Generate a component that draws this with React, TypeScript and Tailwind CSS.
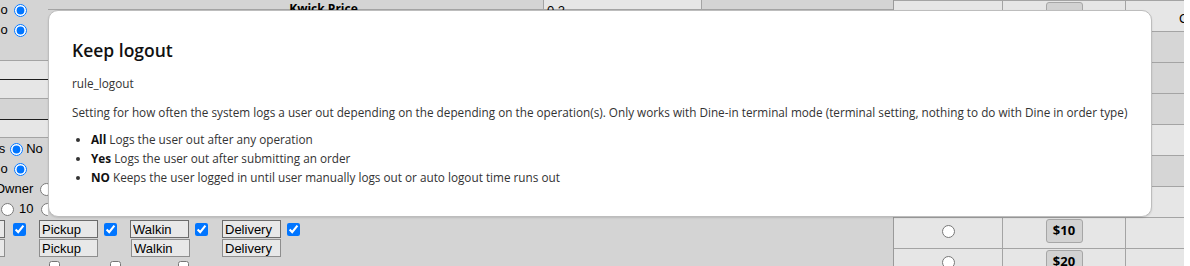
const sans = "font-['Liberation_Sans',Arial,sans-serif]";
const open = "font-['Open_Sans','Noto_Sans',sans-serif]";

// ─── Background helpers ───────────────────────────────────────
const Radio = ({ on = false, className = "" }: { on?: boolean; className?: string }) => (
  <input type="radio" checked={on} readOnly className={`m-0 h-[13px] w-[13px] shrink-0 ${className}`} />
);

const Check = ({ on = true, className = "" }: { on?: boolean; className?: string }) => (
  <input type="checkbox" checked={on} readOnly className={`m-0 h-[13px] w-[13px] shrink-0 ${className}`} />
);

const Field = ({ value, className = "", dark = true }: { value: string; className?: string; dark?: boolean }) => (
  <input
    type="text"
    value={value}
    readOnly
    className={`h-[18px] w-[59px] shrink-0 border bg-[#e8e8e8] px-[2px] text-[13px] leading-[16px] text-black outline-none ${
      dark ? "border-[#6b6b6b]" : "border-[#8e8e8e]"
    } ${sans} ${className}`}
  />
);

// ─── Left column (mostly hidden by the dialog) ────────────────
const LeftColumn = () => (
  <div className={`h-[216px] w-[48px] shrink-0 overflow-hidden text-[13px] text-black ${sans}`}>
    <div className="h-[60px]">
      <div className="flex h-[20px] items-center whitespace-nowrap">
        <span className="-ml-[9px]">No</span>
        <Radio on className="ml-[6px]" />
      </div>
      <div className="flex h-[20px] items-center whitespace-nowrap">
        <span className="-ml-[9px]">No</span>
        <Radio on className="ml-[6px]" />
      </div>
    </div>
    <div className="h-px bg-[#a4a4a4]" />
    <div className="h-[18px] bg-[#e6e6e6]" />
    <div className="h-px bg-[#1e1e1e]" />
    <div className="h-[18px] bg-[#e6e6e6]" />
    <div className="h-px bg-[#a4a4a4]" />
    <div className="h-[20px]" />
    <div className="h-px bg-[#1e1e1e]" />
    <div className="h-[17px] bg-[#e6e6e6]" />
    <div className="h-px bg-[#a4a4a4]" />
    <div className="pt-px">
      <div className="flex h-[20px] items-center whitespace-nowrap">
        <span className="-ml-[16px]">Yes</span>
        <Radio on className="ml-[5px]" />
        <span className="ml-[3px]">No</span>
      </div>
      <div className="flex h-[20px] items-center whitespace-nowrap">
        <span className="-ml-[9px]">No</span>
        <Radio on className="ml-[6px]" />
      </div>
      <div className="flex h-[20px] items-center whitespace-nowrap">
        <span className="-ml-[5px]">Owner</span>
        <Radio className="ml-[7px]" />
      </div>
      <div className="flex h-[20px] items-center whitespace-nowrap">
        <Radio className="ml-[1px]" />
        <span className="ml-[5px]">10</span>
        <Radio className="ml-[8px]" />
      </div>
    </div>
  </div>
);

// ─── Left area: header row, hidden body, order type inputs ────
const LeftArea = () => (
  <div className="flex w-[893px] shrink-0 flex-col bg-[#d4d4d4]">
    <div className="flex h-[216px]">
      <LeftColumn />
      <div className="flex h-[10px] flex-1 border-b border-[#a4a4a4]">
        <div
          className={`w-[496px] border-r border-[#a4a4a4] pl-[56px] pt-[2px] text-center text-[12px] font-bold leading-[14px] text-black ${open}`}
        >
          Kwick Price
        </div>
        <div className={`w-[158px] border-r border-[#a4a4a4] bg-[#e6e6e6] pl-[3px] pt-[3px] text-[13px] leading-[15px] text-black ${sans}`}>
          0.2
        </div>
        <div className="flex-1" />
      </div>
    </div>

    <div className="flex flex-col pt-[4px]">
      <div className="flex items-center">
        <Field value="" className="-ml-[54px]" />
        <Check className="ml-[8px]" />
        <Field value="Pickup" className="ml-[13px]" />
        <Check className="ml-[6px]" />
        <Field value="Walkin" className="ml-[13px]" />
        <Check className="ml-[6px]" />
        <Field value="Delivery" className="ml-[14px]" />
        <Check className="ml-[6px]" />
      </div>
      <div className="mt-[1px] flex items-center">
        <Field value="" dark={false} className="-ml-[54px]" />
        <Field value="Pickup" dark={false} className="ml-[34px]" />
        <Field value="Walkin" dark={false} className="ml-[33px]" />
        <Field value="Delivery" dark={false} className="ml-[32px]" />
      </div>
      <div className="mt-[4px] flex">
        <Check on={false} className="ml-[49px] !h-[11px] !w-[11px]" />
        <Check on={false} className="ml-[50px] !h-[11px] !w-[11px]" />
        <Check on={false} className="ml-[57px] !h-[11px] !w-[11px]" />
      </div>
    </div>
  </div>
);

// ─── Right table: radio / amount / extra ──────────────────────
const rows = [
  { amount: "", light: true, extra: "C", radio: false },
  { amount: "$6", light: false },
  { amount: "$7", light: false },
  { amount: "$8", light: false },
  { amount: "$9", light: true },
  { amount: "$9", light: false },
  { amount: "$9", light: true },
  { amount: "$10", light: true },
  { amount: "$20", light: true },
];

const RightTable = () => (
  <div className="flex w-[291px] shrink-0 flex-col border-l border-[#9a9a9a] bg-[#d4d4d4]">
    <div className="h-[4px] border-b border-[#a4a4a4]" />
    {rows.map((r, i) => (
      <div
        key={i}
        className={`flex h-[31px] shrink-0 border-b border-[#a4a4a4] ${r.light ? "bg-[#e6e6e6]" : "bg-[#d6d6d6]"}`}
      >
        <div className="flex w-[109px] justify-center border-r border-[#a4a4a4] pt-[7px]">
          {r.radio !== false && <Radio />}
        </div>
        <div className="flex w-[123px] justify-center border-r border-[#a4a4a4] pt-[1px]">
          <div
            className={`flex h-[24px] w-[37px] items-center justify-center rounded-[3px] border border-[#a6a6a6] bg-[#d2d2d2] text-[13px] font-bold text-black ${open}`}
          >
            {r.amount}
          </div>
        </div>
        <div className={`flex-1 overflow-hidden pl-[53px] pt-[10px] text-[13px] leading-[15px] text-black ${sans}`}>
          {r.extra}
        </div>
      </div>
    ))}
  </div>
);

// ─── Dialog ───────────────────────────────────────────────────
const Dialog = () => (
  <div
    className={`absolute left-[48px] top-[10px] h-[207px] w-[1104px] rounded-[10px] border border-[#bdbdbd] bg-white px-[23px] pt-[27px] text-[#333] shadow-[0_1px_2px_rgba(0,0,0,0.12)] ${open}`}
  >
    <h2 className="text-[17.5px] font-semibold leading-[24px] text-[#111]">Keep logout</h2>
    <p className="mt-[12px] text-[11.75px] leading-[19px]">rule_logout</p>
    <p className="mt-[10px] whitespace-nowrap text-[11.75px] leading-[19px]">
      Setting for how often the system logs a user out depending on the depending on the operation(s). Only works with
      Dine-in terminal mode (terminal setting, nothing to do with Dine in order type)
    </p>
    <ul className="mt-[8px] list-disc pl-[19px] text-[11.75px] leading-[19px]">
      <li>
        <b className="font-bold text-[#111]">All</b> Logs the user out after any operation
      </li>
      <li>
        <b className="font-bold text-[#111]">Yes</b> Logs the user out after submitting an order
      </li>
      <li>
        <b className="font-bold text-[#111]">NO</b> Keeps the user logged in until user manually logs out or auto logout
        time runs out
      </li>
    </ul>
  </div>
);

export default function App() {
  return (
    <div className="relative h-[266px] w-[1190px] overflow-hidden bg-white">
      <div className="flex h-full">
        <LeftArea />
        <RightTable />
        <div className="flex-1 bg-white" />
      </div>
      <Dialog />
    </div>
  );
}
